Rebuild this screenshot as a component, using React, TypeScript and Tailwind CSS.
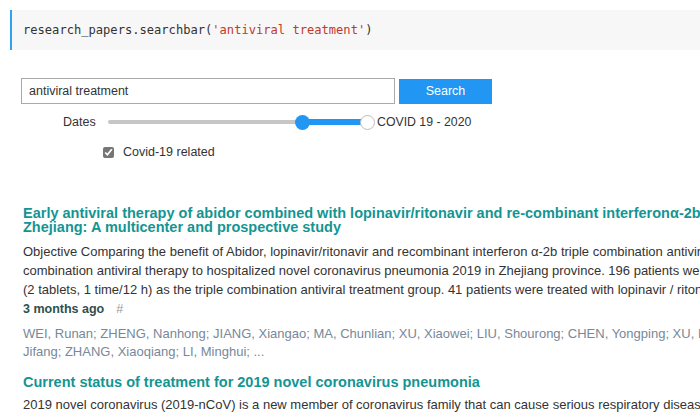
import React from 'react';

const sans = { fontFamily: '"Liberation Sans", Arial, sans-serif' };

export default function App() {
  return (
    <div className="w-[700px] h-[414px] overflow-hidden bg-white text-[#333]" style={sans}>
      {/* code cell */}
      <div className="mt-[10px] ml-[10px] h-[40px] bg-[#f7f7f7] border-l-2 border-[#2ea3f2] flex items-center pl-[11px] pt-px">
        <span className="text-[12.1px] text-[#333] whitespace-nowrap" style={{ fontFamily: '"DejaVu Sans Mono", "Liberation Mono", monospace' }}>
          research_papers.searchbar(<span className="text-[#c0392b]">'antiviral treatment'</span>)
        </span>
      </div>

      {/* search row */}
      <div className="mt-[28px] flex items-start">
        <input
          readOnly
          value="antiviral treatment"
          className="ml-[21px] w-[374px] h-[26px] border border-[#a9a9a9] px-[7px] text-[12.5px] text-[#333] outline-none"
          style={sans}
        />
        <button className="ml-[4px] mt-px w-[93px] h-[25px] bg-[#2196f3] text-white text-[12.5px]">Search</button>
      </div>

      {/* dates slider */}
      <div className="mt-[10px] flex items-center h-[16px]">
        <span className="ml-[63px] w-[33px] text-[12.5px] whitespace-nowrap">Dates</span>
        <div className="ml-[12px] relative w-[260px] h-[16px] flex items-center">
          <div className="w-full h-[4px] bg-[#c6c6c6] rounded" />
          <div className="absolute left-[194px] w-[65px] h-[6px] bg-[#2196f3]" />
          <div className="absolute left-[187px] w-[15px] h-[15px] rounded-full bg-[#2196f3]" />
          <div className="absolute left-[252px] w-[15px] h-[15px] rounded-full bg-white border border-[#bdbdbd]" />
        </div>
        <span className="ml-[9px] text-[12.3px] whitespace-nowrap">COVID 19 - 2020</span>
      </div>

      {/* covid checkbox */}
      <div className="mt-[13px] flex items-center">
        <input type="checkbox" checked readOnly className="ml-[103px] w-[11px] h-[11px] accent-[#767676]" />
        <span className="ml-[9px] text-[12.5px]">Covid-19 related</span>
      </div>

      {/* results */}
      <div className="mt-[44px] pl-[23px]">
        <div className="text-[#139593] font-bold text-[14.5px] leading-[14px] whitespace-nowrap">
          <div>Early antiviral therapy of abidor combined with lopinavir/ritonavir and re-combinant interferonα-2b triple combination antiviral therapy in</div>
          <div>Zhejiang: A multicenter and prospective study</div>
        </div>
        <div className="mt-[8px] text-[13px] leading-[19px] text-[#333] whitespace-nowrap">
          <div>Objective Comparing the benefit of Abidor, lopinavir/ritonavir and recombinant interferon α-2b triple combination antiviral therapy and lopinavir/ritonavir</div>
          <div>combination antiviral therapy to hospitalized novel coronavirus pneumonia 2019 in Zhejiang province. 196 patients were treated with Abidor</div>
          <div>(2 tablets, 1 time/12 h) as the triple combination antiviral treatment group. 41 patients were treated with lopinavir / ritonavir</div>
        </div>
        <div className="mt-px text-[12.5px] leading-[19px] whitespace-nowrap">
          <span className="font-bold text-[#2f4f4f]">3 months ago</span>
          <span className="ml-[12px] text-[#999]">#</span>
        </div>
        <div className="mt-[6px] text-[13px] leading-[18px] text-[#778899] whitespace-nowrap">
          <div>WEI, Runan; ZHENG, Nanhong; JIANG, Xiangao; MA, Chunlian; XU, Xiaowei; LIU, Shourong; CHEN, Yongping; XU, Kaijin; LI, Lanjuan;</div>
          <div>Jifang; ZHANG, Xiaoqiang; LI, Minghui; ...</div>
        </div>

        <div className="mt-[14px] text-[#139593] font-bold text-[14.5px] leading-[14px] whitespace-nowrap">
          Current status of treatment for 2019 novel coronavirus pneumonia
        </div>
        <div className="mt-[6px] text-[13px] leading-[19px] text-[#333] whitespace-nowrap">
          2019 novel coronavirus (2019-nCoV) is a new member of coronavirus family that can cause serious respiratory diseases
        </div>
      </div>
    </div>
  );
}
